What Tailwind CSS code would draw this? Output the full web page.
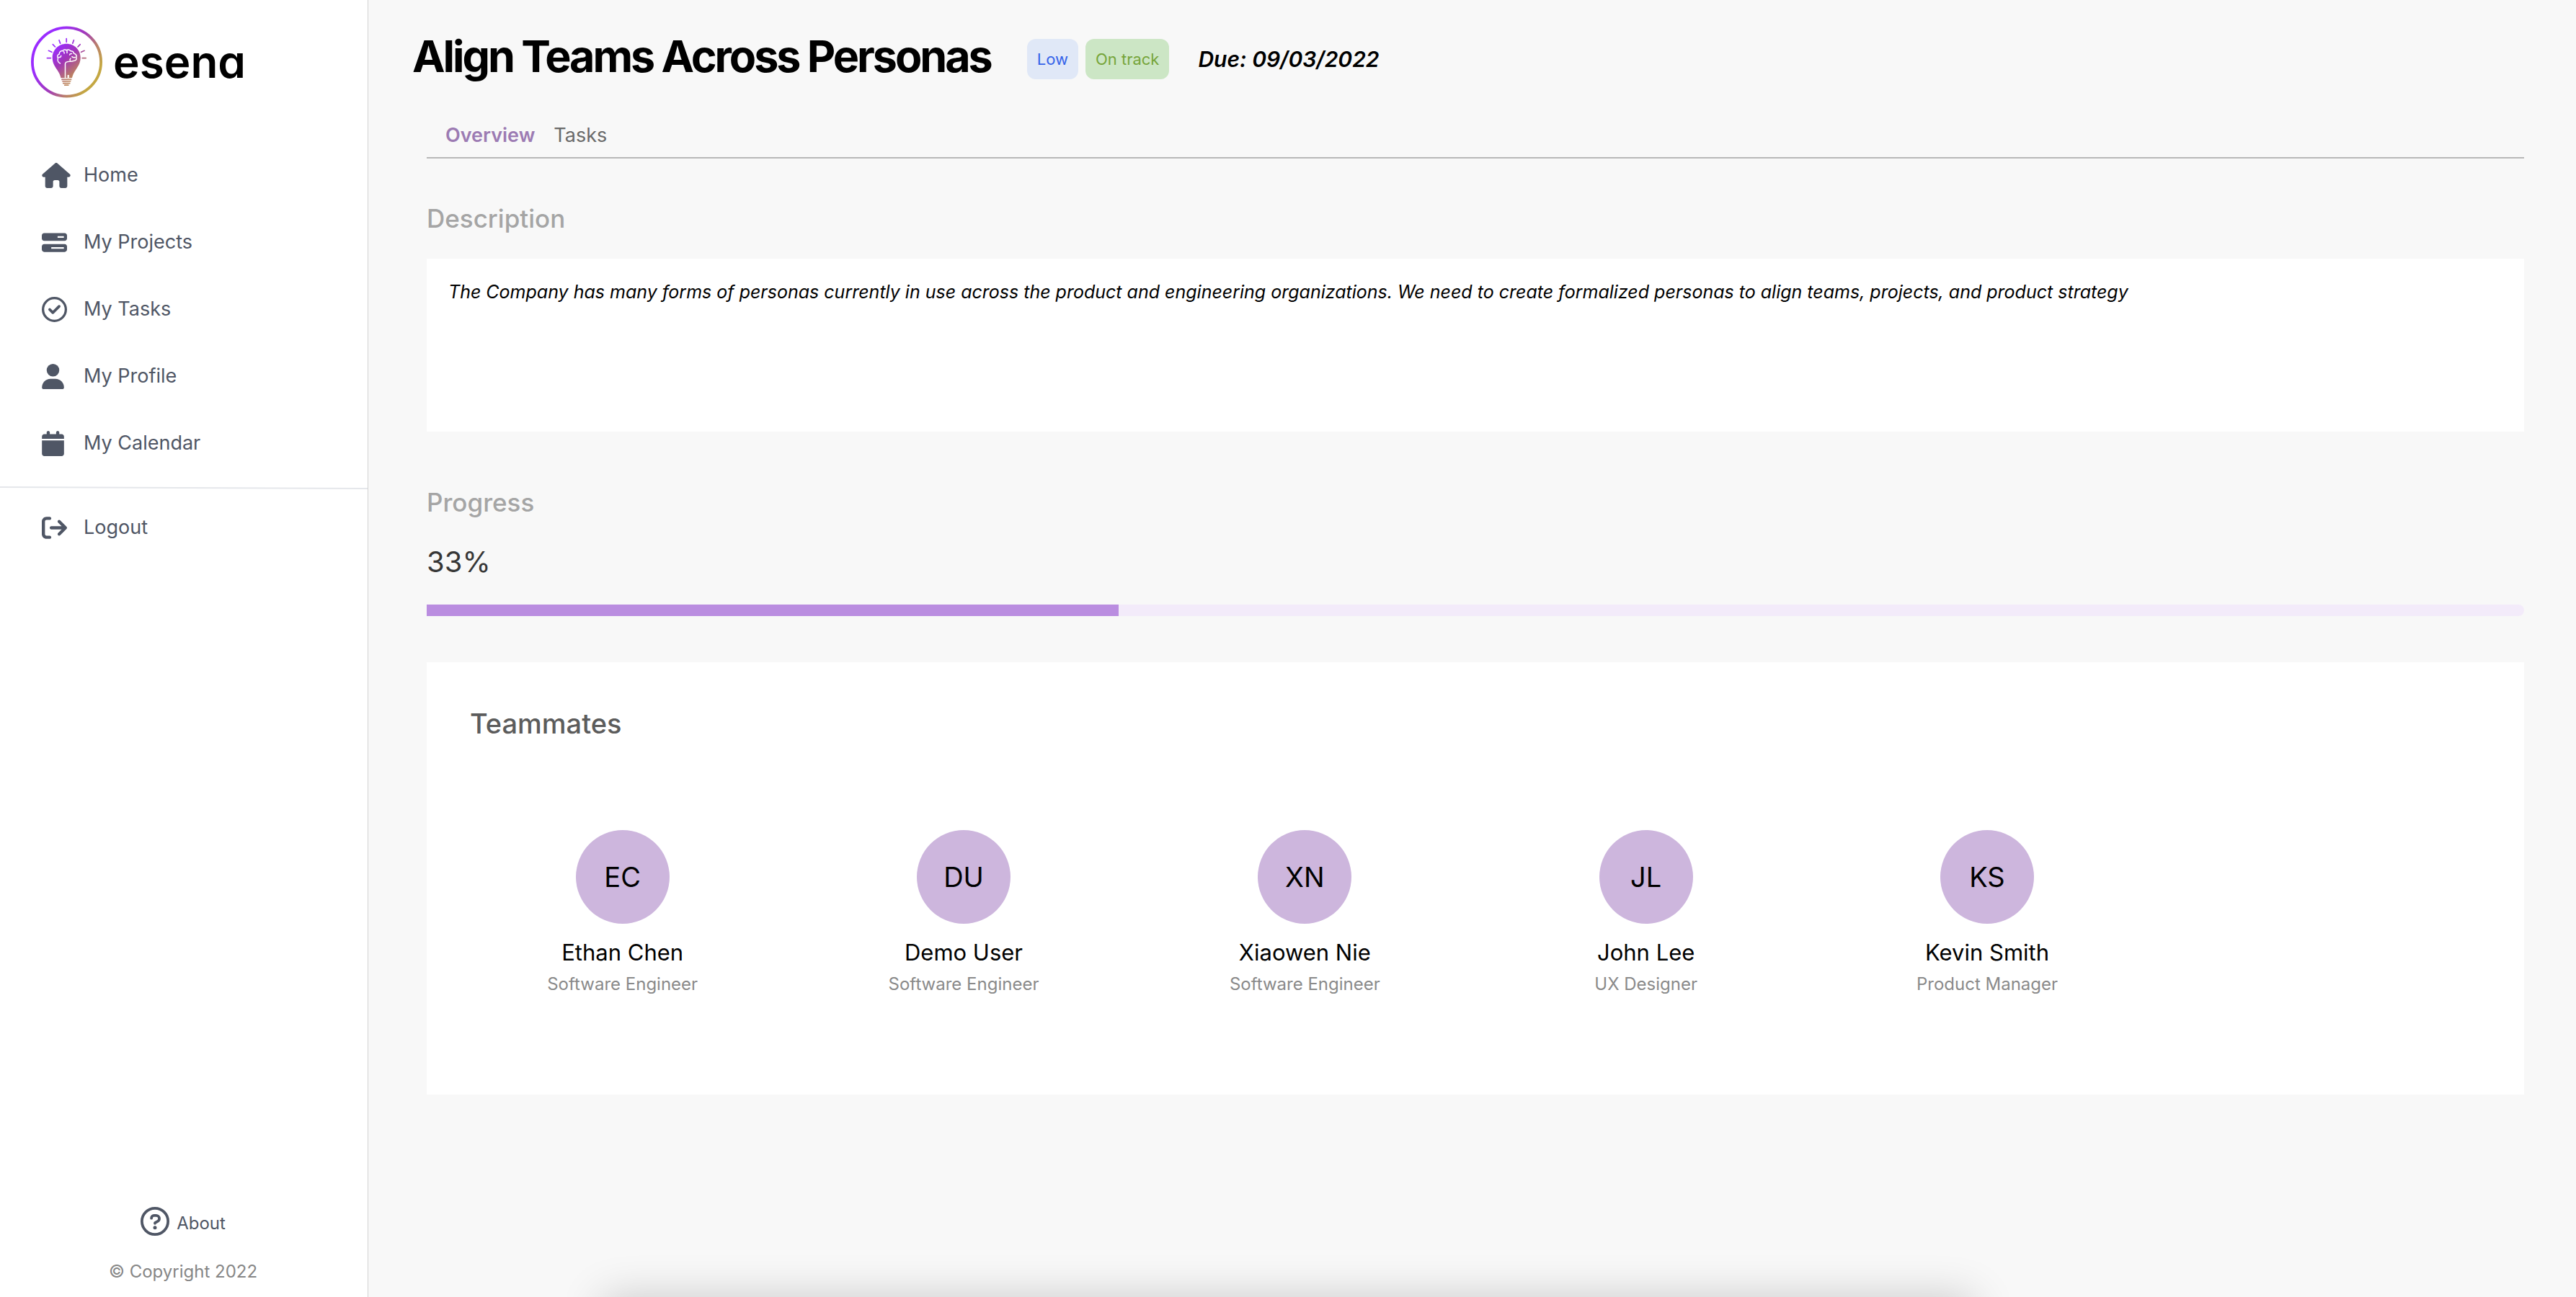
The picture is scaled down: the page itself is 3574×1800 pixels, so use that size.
<!DOCTYPE html>
<html lang="en">
<head>
<meta charset="utf-8">
<meta name="viewport" content="width=device-width, initial-scale=1">
<title>esena</title>
<script src="https://cdn.jsdelivr.net/npm/@tailwindcss/browser@4"></script>
</head>
<body class="flex min-h-screen overflow-x-hidden bg-[#f8f8f8] font-['Inter','Liberation_Sans',sans-serif] text-black">

<aside class="flex w-[511px] shrink-0 flex-col border-r border-[#d2d2d2] bg-white text-[#4f5665]">
  <a href="#" class="flex items-center gap-3.5 pt-9 pl-[43px] text-black">
    <svg class="size-[100px]" viewBox="0 0 100 100" fill="none" aria-hidden="true">
      <defs>
        <linearGradient id="ring" x1="10" y1="25" x2="90" y2="75" gradientUnits="userSpaceOnUse">
          <stop offset="0.15" stop-color="#9a2cff"/><stop offset="0.5" stop-color="#a23aba"/><stop offset="0.72" stop-color="#b87a70"/><stop offset="0.95" stop-color="#c4a742"/>
        </linearGradient>
        <linearGradient id="bulb" x1="28" y1="26" x2="70" y2="74" gradientUnits="userSpaceOnUse">
          <stop offset="0.1" stop-color="#9a2cff"/><stop offset="0.45" stop-color="#a136b5"/><stop offset="0.8" stop-color="#bb7f62"/><stop offset="1" stop-color="#c9a06a"/>
        </linearGradient>
      </defs>
      <circle cx="49.5" cy="50" r="47.6" stroke="url(#ring)" stroke-width="3.8"/>
      <path fill="url(#bulb)" d="M49.2 24.8C38.3 24.8 29.7 33.3 29.7 44c0 7 3 11.500 6.300 16.500 2.800 4.200 4.500 7.500 5.500 11.800h15.400c1-4.300 2.700-7.600 5.500-11.800 3.300-5 6.300-9.500 6.300-16.500 0-10.700-8.600-19.200-19.500-19.200z"/>
      <g stroke="url(#bulb)" stroke-width="1.7" stroke-linecap="round">
        <path d="M43 74.400h12.600M44 77h10.600M44.800 79.600h9M46.800 82.200h5"/>
        <path d="M22.400 44.600h5M71.200 44.600h5M24.400 34.300l4.500 2M69.600 36.300l4.500-2M30.300 25.600l3.200 3.400M65 29l3.200-3.400M39 19.700l1.600 4.400M57.800 24.100l1.600-4.400M49.200 17.600l.02 4.700"/>
      </g>
      <g stroke="#fff" stroke-width="1.500" stroke-linecap="round" stroke-linejoin="round">
        <path d="M40.500 52c-3-1.500-4-4.500-3-7-1.800-2.800-.5-5.500 1.800-6-.2-3 2.200-4.800 4.600-4.300 1-1.900 3.600-2.200 5.200-1 2-1.400 4.700-.9 5.700 1 2.600-.3 4.700 1.400 4.700 3.500 2.800.6 4.400 3 3.500 5.500.7 3-1.200 4.700-4 4.800-2 1-4 .5-5.500.7-3.500.3-6 .8-6 3.300V72"/>
        <path d="M38.500 43.500c2.300.3 3.200-.7 3.200-2.200M45.200 35.500c.8.700 1.200 1.500.9 2.500M50 34.500v3M56.500 38.500c-1.700-.2-2.700.6-2.900 1.700M61.500 43.500c-2 .6-3.800.2-4.600-1M54.300 48c-.6-1.200-.3-2.200.7-3"/>
        <path stroke-width="2.200" stroke-linecap="butt" d="M51.700 68v4"/>
      </g>
    </svg>
    <span class="text-[62px] leading-[64px] font-semibold [font-feature-settings:'cv11']">esena</span>
  </a>

  <nav class="mt-[61px] text-[27px]" aria-label="Main">
    <ul>
      <li><a href="#" class="flex h-[93px] items-center pl-[58px]">
        <span class="w-[58px]"><svg class="h-[35px] w-10" viewBox="0 0 576 512" fill="currentColor"><path d="M575.8 255.500c0 18-15 32.100-32 32.100h-32l.7 160.200c0 2.700-.2 5.400-.5 8.100V472c0 22.100-17.900 40-40 40H456c-1.100 0-2.200 0-3.300-.1c-1.400 .1-2.800 .1-4.200 .1H416 392c-22.100 0-40-17.900-40-40V448 384c0-17.700-14.300-32-32-32H256c-17.700 0-32 14.300-32 32v64 24c0 22.100-17.900 40-40 40H160 128.100c-1.500 0-3-.1-4.500-.2c-1.200 .1-2.400 .2-3.600 .2H104c-22.100 0-40-17.900-40-40V360c0-.9 0-1.900 .1-2.800V287.600H32c-18 0-32-14-32-32.100c0-9 3-17 10-24L266.400 8c7-7 15-8 22-8s15 2 21 7L564.800 231.500c8 7 12 15 11 24z"/></svg></span>Home</a></li>
      <li><a href="#" class="flex h-[93px] items-center pl-[58px]">
        <span class="w-[58px]"><svg class="size-[35px]" viewBox="0 0 512 512" fill="currentColor"><path d="M448 160H320V128H448v32zM48 64C21.500 64 0 85.500 0 112v64c0 26.500 21.500 48 48 48H464c26.500 0 48-21.500 48-48V112c0-26.500-21.500-48-48-48H48zM448 352v32H192V352H448zM48 288c-26.500 0-48 21.500-48 48v64c0 26.500 21.500 48 48 48H464c26.500 0 48-21.500 48-48V336c0-26.500-21.500-48-48-48H48z"/></svg></span>My Projects</a></li>
      <li><a href="#" class="flex h-[93px] items-center pl-[58px]">
        <span class="w-[58px]"><svg class="size-[35px]" viewBox="0 0 512 512" fill="currentColor"><circle cx="256" cy="256" r="232" fill="none" stroke="currentColor" stroke-width="48"/><path d="M243.800 339.800C232.900 350.700 215.100 350.700 204.200 339.800L140.200 275.800C129.300 264.900 129.300 247.100 140.200 236.200C151.100 225.300 168.900 225.300 179.800 236.200L224 280.400L332.200 172.200C343.100 161.300 360.900 161.300 371.800 172.200C382.700 183.100 382.700 200.900 371.800 211.800L243.800 339.800z"/></svg></span>My Tasks</a></li>
      <li><a href="#" class="flex h-[93px] items-center pl-[58px]">
        <span class="w-[58px]"><svg class="h-[35px] w-[31px]" viewBox="0 0 448 512" fill="currentColor"><circle cx="224" cy="128" r="128"/><path d="M274.700 304H173.300C77.610 304 0 381.600 0 477.300C0 496.500 15.520 512 34.660 512h378.700C432.500 512 448 496.500 448 477.300C448 381.600 370.400 304 274.700 304z"/></svg></span>My Profile</a></li>
      <li><a href="#" class="flex h-[93px] items-center pl-[58px]">
        <span class="w-[58px]"><svg class="h-[35px] w-[31px]" viewBox="0 0 448 512" fill="currentColor"><path d="M96 32C96 14.330 110.300 0 128 0C145.700 0 160 14.330 160 32V64H288V32C288 14.330 302.300 0 320 0C337.700 0 352 14.330 352 32V64H400C426.500 64 448 85.490 448 112V160H0V112C0 85.490 21.490 64 48 64H96V32zM448 464C448 490.500 426.500 512 400 512H48C21.490 512 0 490.500 0 464V192H448V464z"/></svg></span>My Calendar</a></li>
    </ul>
    <svg class="mt-[13px] block h-1 w-full" viewBox="0 0 510 4" preserveAspectRatio="none" aria-hidden="true"><path d="M0 1L510 3" stroke="#e5e7eb" stroke-width="2"/></svg>
    <a href="#" class="mt-[7px] flex h-[93px] items-center pl-[58px]">
      <span class="w-[58px]"><svg class="size-[35px]" viewBox="0 0 512 512" fill="currentColor"><path d="M160 416H96c-17.670 0-32-14.330-32-32V128c0-17.670 14.330-32 32-32h64c17.670 0 32-14.330 32-32S177.700 32 160 32H96C42.980 32 0 74.980 0 128v256c0 53.020 42.980 96 96 96h64c17.670 0 32-14.330 32-32S177.700 416 160 416zM502.600 233.400l-128-128c-12.510-12.510-32.760-12.490-45.250 0c-12.500 12.500-12.500 32.750 0 45.250L402.800 224H192C174.300 224 160 238.300 160 256s14.310 32 32 32h210.800l-73.380 73.380c-12.500 12.500-12.500 32.750 0 45.250s32.750 12.500 45.250 0l128-128C515.100 266.100 515.100 245.900 502.600 233.400z"/></svg></span>Logout</a>
  </nav>

  <footer class="mt-auto flex flex-col items-center gap-7 pr-0.5 pb-[19px] text-2xl">
    <a href="#" class="flex items-start gap-2.5 leading-[46px]">
      <svg class="size-10" viewBox="0 0 512 512" fill="none" stroke="currentColor" stroke-width="48" stroke-linecap="round" stroke-linejoin="round"><circle cx="256" cy="256" r="232"/><path d="M193 200C193 173 212 152 238 152h38c32 0 57 24 57 55c0 20-10 37-27 47L256 284v8"/><circle cx="256" cy="367" r="32" fill="currentColor" stroke="none"/></svg>
      About
    </a>
    <p class="leading-8 text-[#868686]">© Copyright 2022</p>
  </footer>
</aside>

<main class="min-w-0 flex-1 pt-[46px] pr-[72px] pb-20">
  <header class="flex items-end pl-[61px]">
    <h1 class="text-[61px] leading-[64px] font-bold tracking-tighter">Align Teams Across Personas</h1>
    <div class="ml-[50px] flex gap-2.5 text-[22px] leading-[56px]">
      <span class="rounded-xl bg-[#e0e8f7] px-3.5 text-[#3563e9]">Low</span>
      <span class="rounded-xl bg-[#cce6c5] px-3.5 text-[#76a53a]">On track</span>
    </div>
    <p class="ml-10 text-[30px] leading-[56px] font-semibold italic">Due: 09/03/2022</p>
  </header>

  <div class="pl-[81px]">
    <nav class="mt-[60px] flex gap-[26px] border-b-2 border-[#b8b8b8] pb-3 pl-[26px] text-[27px] leading-9" aria-label="Project">
      <a href="#" class="font-semibold text-[#9c7bb3]">Overview</a>
      <a href="#" class="text-[#6a6a6a]">Tasks</a>
    </nav>

    <section>
      <h2 class="mt-[59px] text-[35px] leading-[48px] font-medium text-[#a5a5a5]">Description</h2>
      <p class="mt-8 min-h-[240px] bg-white px-[30px] pt-7 text-[25px] leading-9 italic">The Company has many forms of personas currently in use across the product and engineering organizations. We need to create formalized personas to align teams, projects, and product strategy</p>
    </section>

    <section>
      <h2 class="mt-[74px] text-[35px] leading-[48px] font-medium text-[#a5a5a5]">Progress</h2>
      <p class="mt-[35px] text-[40px] leading-[48px] text-[#363636]">33%</p>
      <div class="mt-[35px] h-4 rounded-r-full bg-[#f3ebfa]" role="progressbar" aria-label="Progress" aria-valuenow="33" aria-valuemin="0" aria-valuemax="100">
        <div class="h-4 bg-[#ba8de0]" style="width:33%"></div>
      </div>
    </section>

    <section class="mt-16 min-h-[600px] bg-white pt-[61px]">
      <h2 class="pl-[60px] text-[38px] leading-[48px] font-medium text-[#5c5c5c]">Teammates</h2>
      <ul class="mt-[124px] grid grid-cols-6 px-[35px] text-center">
        <li class="flex flex-col items-center">
          <span class="flex size-[130px] items-center justify-center rounded-full bg-[#cdb6dd] text-[38px]">EC</span>
          <h3 class="mt-5 text-[31px] leading-10">Ethan Chen</h3>
          <p class="mt-2 text-2xl text-[#8a8a8a]">Software Engineer</p>
        </li>
        <li class="flex flex-col items-center">
          <span class="flex size-[130px] items-center justify-center rounded-full bg-[#cdb6dd] text-[38px]">DU</span>
          <h3 class="mt-5 text-[31px] leading-10">Demo User</h3>
          <p class="mt-2 text-2xl text-[#8a8a8a]">Software Engineer</p>
        </li>
        <li class="flex flex-col items-center">
          <span class="flex size-[130px] items-center justify-center rounded-full bg-[#cdb6dd] text-[38px]">XN</span>
          <h3 class="mt-5 text-[31px] leading-10">Xiaowen Nie</h3>
          <p class="mt-2 text-2xl text-[#8a8a8a]">Software Engineer</p>
        </li>
        <li class="flex flex-col items-center">
          <span class="flex size-[130px] items-center justify-center rounded-full bg-[#cdb6dd] text-[38px]">JL</span>
          <h3 class="mt-5 text-[31px] leading-10">John Lee</h3>
          <p class="mt-2 text-2xl text-[#8a8a8a]">UX Designer</p>
        </li>
        <li class="flex flex-col items-center">
          <span class="flex size-[130px] items-center justify-center rounded-full bg-[#cdb6dd] text-[38px]">KS</span>
          <h3 class="mt-5 text-[31px] leading-10">Kevin Smith</h3>
          <p class="mt-2 text-2xl text-[#8a8a8a]">Product Manager</p>
        </li>
      </ul>
    </section>
  </div>
</main>

<div class="pointer-events-none fixed inset-x-[23.4%] top-full h-40 shadow-[0_0_60px_rgba(0,0,0,0.19)]"></div>
</body>
</html>
